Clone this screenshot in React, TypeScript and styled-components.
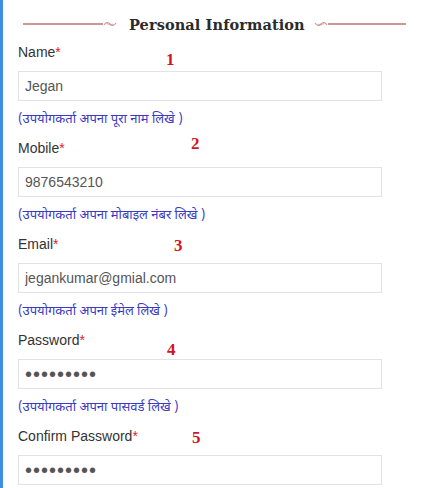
import React from "react";
import styled, { createGlobalStyle } from "styled-components";

const Global = createGlobalStyle`
  html, body { margin: 0; padding: 0; background: #ffffff; }
  body { font-family: "Liberation Sans", Arial, sans-serif; }
`;

const Page = styled.div`
  display: flex;
  min-height: 488px;
  background: #ffffff;
`;

const SideBar = styled.div`
  width: 3px;
  flex: none;
  background: #3d8ee2;
`;

const Content = styled.div`
  flex: 1;
  padding-left: 15px;
  display: flex;
  flex-direction: column;
`;

const Header = styled.div`
  display: flex;
  align-items: center;
  height: 42px;
  padding-top: 6px;
  box-sizing: border-box;
  margin-left: 5px;
  width: 385px;
`;

const Rule = styled.div<{ $w: number }>`
  width: ${(p) => p.$w}px;
  height: 2px;
  background: #cd9595;
  flex: none;
`;

const Title = styled.h2`
  margin: 0 9px 0 12px;
  font-family: "DejaVu Serif", Georgia, serif;
  font-weight: bold;
  font-size: 14.5px;
  color: #2b2b2b;
  white-space: nowrap;
  letter-spacing: 0.1px;
`;

const Field = styled.div`
  position: relative;
  display: flex;
  flex-direction: column;
  margin-bottom: 8px;
`;

const Label = styled.label`
  font-size: 14px;
  line-height: 20px;
  color: #333333;
`;

const Star = styled.span`
  color: #e0202a;
`;

const Input = styled.input<{ $pw?: boolean }>`
  margin-top: 9px;
  width: 364px;
  height: 30px;
  box-sizing: border-box;
  border: 1px solid #e3e3e3;
  background: #ffffff;
  padding: 0 6px;
  font-family: "Liberation Sans", Arial, sans-serif;
  font-size: ${(p) => (p.$pw ? "20px" : "14px")};
  letter-spacing: ${(p) => (p.$pw ? "1px" : "0")};
  color: #555555;
  outline: none;
`;

const Hint = styled.div`
  margin-top: 9px;
  font-size: 13px;
  line-height: 20px;
  color: #3a3ac4;
  font-family: "Noto Sans Devanagari", "Noto Sans", "Liberation Sans", sans-serif;
`;

const Num = styled.span`
  position: absolute;
  font-family: "Liberation Serif", "Times New Roman", serif;
  font-weight: bold;
  font-size: 17px;
  line-height: 17px;
  color: #d0161f;
`;

const Ornament = ({ flip }: { flip?: boolean }) => (
  <svg
    width="14"
    height="8"
    viewBox="0 0 14 8"
    style={{ flex: "none", transform: flip ? "scaleX(-1)" : undefined }}
  >
    <path
      d="M1 5 C3 2, 5 2, 7 4 S11 6, 13 3"
      fill="none"
      stroke="#cd9595"
      strokeWidth="1.1"
    />
    <path d="M4 3.5 C6 5, 8 5.5, 10 4" fill="none" stroke="#cd9595" strokeWidth="0.8" />
  </svg>
);

type F = {
  label: string;
  value: string;
  pw?: boolean;
  hint?: string;
  n: number;
  nx: number;
  ny: number;
};

const fields: F[] = [
  { label: "Name", value: "Jegan", hint: "(उपयोगकर्ता अपना पूरा नाम लिखे )", n: 1, nx: 148, ny: 9 },
  { label: "Mobile", value: "9876543210", hint: "(उपयोगकर्ता अपना मोबाइल नंबर लिखे )", n: 2, nx: 173, ny: -3 },
  { label: "Email", value: "jegankumar@gmial.com", hint: "(उपयोगकर्ता अपना ईमेल लिखे )", n: 3, nx: 156, ny: 3 },
  { label: "Password", value: "123456789", pw: true, hint: "(उपयोगकर्ता अपना पासवर्ड लिखे )", n: 4, nx: 149, ny: 11 },
  { label: "Confirm Password", value: "123456789", pw: true, n: 5, nx: 174, ny: 3 },
];

export default function App() {
  return (
    <>
      <Global />
      <Page>
        <SideBar />
        <Content>
          <Header>
            <Rule $w={80} />
            <Ornament />
            <Title>Personal Information</Title>
            <Ornament flip />
            <Rule $w={78} />
          </Header>
          {fields.map((f) => (
            <Field key={f.label}>
              <Label>
                {f.label}
                <Star>*</Star>
              </Label>
              <Num style={{ left: f.nx, top: f.ny }}>{f.n}</Num>
              <Input
                type={f.pw ? "password" : "text"}
                $pw={f.pw}
                value={f.value}
                readOnly
              />
              {f.hint && <Hint>{f.hint}</Hint>}
            </Field>
          ))}
        </Content>
      </Page>
    </>
  );
}
